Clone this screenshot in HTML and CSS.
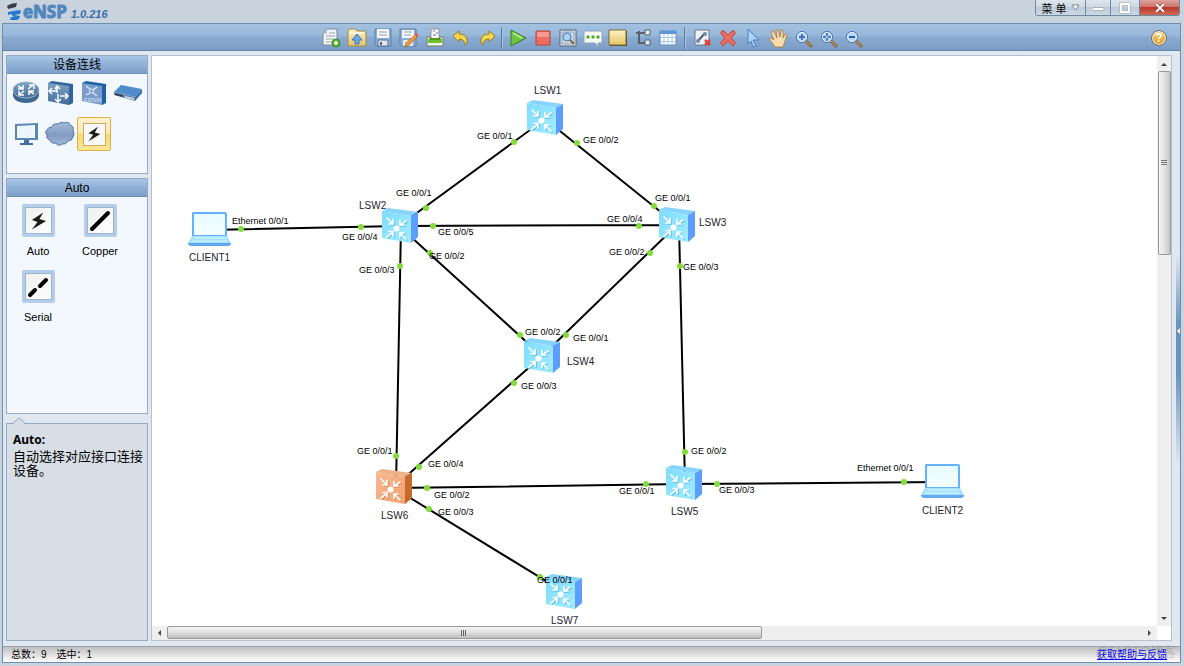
FILE: index.html
```html
<!DOCTYPE html>
<html lang="zh-CN">
<head>
<meta charset="utf-8">
<title>eNSP</title>
<link rel="stylesheet" href="styles.css">
</head>
<body>
<svg class="defs" aria-hidden="true">
  <defs>
    <linearGradient id="blueFace" x1="0" y1="0" x2="1" y2="1"><stop offset="0" stop-color="#7fdcfb"/><stop offset="1" stop-color="#a3ecff"/></linearGradient>
    <linearGradient id="orangeFace" x1="0" y1="0" x2="1" y2="1"><stop offset="0" stop-color="#f6b891"/><stop offset="1" stop-color="#f5a273"/></linearGradient>
    <linearGradient id="steel" x1="0" y1="0" x2="0" y2="1"><stop offset="0" stop-color="#7fa3c6"/><stop offset="1" stop-color="#426b96"/></linearGradient>
    <linearGradient id="cloudFill" x1="0" y1="0" x2="0" y2="1"><stop offset="0" stop-color="#a8bddb"/><stop offset=".55" stop-color="#8299c2"/><stop offset="1" stop-color="#a4b9d8"/></linearGradient>
    <linearGradient id="gold" x1="0" y1="0" x2="0" y2="1"><stop offset="0" stop-color="#fff3c4"/><stop offset="1" stop-color="#e3c566"/></linearGradient>
    <linearGradient id="screen" x1="0" y1="0" x2="0" y2="1"><stop offset="0" stop-color="#e8fbff"/><stop offset="1" stop-color="#f4ffff"/></linearGradient>
    <g id="arrows" fill="none" stroke-width="1.700" stroke-linecap="round">
      <path d="M5 10l6 6M11 11.500V16H7M24 13l-6 4M18 12.500V17h4M5 29l6-5M7 23.500h4V28M24 31l-6-6M22 25h-4v4"/>
    </g>
    <symbol id="switchBlue" viewBox="0 0 36 35">
      <path d="M0 3L6 0l30 4-7 4z" fill="#86d4ff"/>
      <path d="M29 8l7-4v25l-7 6z" fill="#5c9dff"/>
      <path d="M0 3l29 5v27L0 30z" fill="url(#blueFace)"/>
      <use href="#arrows" stroke="#5fc3ea" x="1" y="1"/>
      <use href="#arrows" stroke="#fff"/><circle cx="14.500" cy="20.500" r="3" fill="#fff"/>
    </symbol>
    <symbol id="switchOrange" viewBox="0 0 36 35">
      <path d="M0 3L6 0l30 4-7 4z" fill="#eeb287"/>
      <path d="M29 8l7-4v25l-7 6z" fill="#c46a2a"/>
      <path d="M0 3l29 5v27L0 30z" fill="url(#orangeFace)"/>
      <use href="#arrows" stroke="#de8a55" x="1" y="1"/>
      <use href="#arrows" stroke="#fff"/><circle cx="14.500" cy="20.500" r="3" fill="#fff"/>
    </symbol>
    <symbol id="laptop" viewBox="0 0 43 35">
      <path d="M5 1h32q2 0 2 2v22H4V3q0-2 1-2z" fill="#62b2ff"/>
      <path d="M6 3h31v21H6z" fill="url(#screen)"/>
      <path d="M4 25h35l4 7H0z" fill="#a5e2ff"/>
      <path d="M6 27h31M4 30h35" stroke="#d8f6ff" stroke-width="1"/>
      <path d="M0 32h43v1q-1 2-3 2H3q-2 0-3-2z" fill="#62a8ee"/>
    </symbol>
    <symbol id="bolt" viewBox="0 0 20 20">
      <path d="M15 1L3 9l6 2-6 8 15-9-7-2z" fill="#1b1d18"/>
    </symbol>
    <symbol id="glass" viewBox="0 0 20 20">
      <path d="M11 11l5 5" stroke="#8f6330" stroke-width="3" stroke-linecap="round"/>
      <path d="M11 11l5 5" stroke="#d8a560" stroke-width="1"/>
      <circle cx="7" cy="7" r="5.500" fill="#b5d5f5" stroke="#3f6fb0"/>
      <circle cx="7" cy="7" r="4.500" fill="none" stroke="#e8f3fd"/>
    </symbol>
  </defs>
</svg>

<div class="window">
  <header class="titlebar">
    <svg class="logo" width="15" height="17" viewBox="0 0 15 17" aria-hidden="true">
      <path d="M0 3q4-3 10-3l-1 4-8 2z" fill="#3b3f45"/>
      <path d="M3 6l8-1-1 2-6 1z" fill="#b4cbe4"/>
      <path d="M1 9l12-2 1 1-1 3-6 1 6 1-1 3q-4 2-9 1l1-3h3l-3-3-3 1z" fill="#2678cf"/>
    </svg>
    <h1 class="brand">eNSP</h1>
    <span class="version">1.0.216</span>
    <div class="window-controls">
      <button class="wc wc-menu" type="button">菜 单
        <svg width="9" height="7" viewBox="0 0 9 7" aria-hidden="true"><path d="M1 1h7L4.500 6z" fill="#fff" stroke="#7c8793"/></svg>
      </button>
      <button class="wc wc-min" type="button" aria-label="最小化"><svg width="12" height="10" viewBox="0 0 12 10"><path d="M1 6h10" stroke="#8a949e" stroke-width="3"/><path d="M1 6h10" stroke="#fff" stroke-width="2"/></svg></button>
      <button class="wc wc-max" type="button" aria-label="最大化"><svg width="12" height="12" viewBox="0 0 12 12"><path d="M2 2h8v8H2z" fill="none" stroke="#9aa4ae" stroke-width="3"/><path d="M2 2h8v8H2z" fill="none" stroke="#fff" stroke-width="2"/></svg></button>
      <button class="wc wc-close" type="button" aria-label="关闭"><svg width="12" height="10" viewBox="0 0 12 10"><path d="M2 1l8 8M10 1L2 9" stroke="#6d2b23" stroke-width="3"/><path d="M2 1l8 8M10 1L2 9" stroke="#fff" stroke-width="2"/></svg></button>
    </div>
  </header>

  <div class="client">
    <nav class="toolbar" aria-label="工具栏">
      <span></span>
      <div class="tools">
        <div class="tool-group wide">
          <button type="button" aria-label="新建"><svg viewBox="0 0 20 20"><path d="M6 1h10v16H2V6z" fill="#f2f4f7" stroke="#7a8897"/><path d="M6 1v5H2z" fill="#b9c3ce"/><path d="M8 5h6M5 8h9M5 11h8M5 14h6" stroke="#98a4b1"/><circle cx="15" cy="15" r="4" fill="#5cb531" stroke="#3b8a1b"/><path d="M13 15h4M15 13v4" stroke="#fff" stroke-width="1.500"/></svg></button>
          <button type="button" aria-label="打开"><svg viewBox="0 0 20 20"><path d="M1 3l1-2h6l2 2h8l1 2v13H1z" fill="url(#gold)" stroke="#a58b47"/><path d="M3 5h14" stroke="#fffbe3" stroke-width="2"/><path d="M10 6l5 6h-3v4H8v-4H5z" fill="#6fa8ea" stroke="#3e74ba"/></svg></button>
          <button type="button" aria-label="保存"><svg viewBox="0 0 20 20"><path d="M2 1h16v17H3l-1-1z" fill="#8daed9" stroke="#5f7ea5"/><path d="M4 1h12v9H4z" fill="#f6f8fb"/><path d="M6 4h8M6 7h8" stroke="#8fa0b3"/><path d="M5 12h10v6H5z" fill="#dfe6ee" stroke="#56708f"/><path d="M7 14h2v3H7z" fill="#466185"/></svg></button>
          <button type="button" aria-label="另存为"><svg viewBox="0 0 20 20"><path d="M1 1h16v17H3l-2-2z" fill="#8daed9" stroke="#5f7ea5"/><path d="M3 2h12v8H3z" fill="#f6f8fb"/><path d="M5 4h8M5 7h7" stroke="#8fa0b3"/><path d="M4 12h10v6H4z" fill="#dfe6ee"/><path d="M17 6l2 2-9 9-4 2 1-4z" fill="#f29a3a" stroke="#a65d1d" stroke-width=".7"/><path d="M16 6l2-1 1 2-1 2z" fill="#d9534f"/></svg></button>
          <button type="button" aria-label="打印"><svg viewBox="0 0 20 20"><path d="M6 1h8v10H6z" fill="#fafafa" stroke="#8b959f"/><path d="M8 3h2M11 5h2M8 7h3" stroke="#6d7780"/><path d="M2 9h3v4h10V9h3v9H2z" fill="#f1f3ee" stroke="#6d7c65"/><path d="M3 11h14v4H3z" fill="#6fc02d"/><path d="M5 10h10v2H5z" fill="#4e9a17"/></svg></button>
          <button type="button" aria-label="撤销"><svg viewBox="0 0 20 20"><path d="M2 8l6-5v3q9 0 8 9l-2 2q0-6-6-6v3z" fill="#f4d84f" stroke="#9c7d16"/></svg></button>
          <button type="button" aria-label="重做"><svg viewBox="0 0 20 20"><path d="M18 8l-6-5v3q-9 0-8 9l2 2q0-6 6-6v3z" fill="#f4d84f" stroke="#9c7d16"/></svg></button>
        </div>
        <span class="sep"></span>
        <div class="tool-group">
          <button type="button" aria-label="开启设备"><svg viewBox="0 0 20 20"><path d="M3 2l15 8-15 8z" fill="#6cc43f" stroke="#33801a"/><path d="M5 5l9 5" stroke="#b9eb9c" stroke-width="2"/></svg></button>
          <button type="button" aria-label="停止设备"><svg viewBox="0 0 20 20"><path d="M3 3h14v14H3z" fill="#ef6a61" stroke="#b5473f"/><path d="M4 4h12v5H4z" fill="#f79a92"/></svg></button>
          <button type="button" aria-label="数据抓包"><svg viewBox="0 0 20 20"><path d="M2 2h16v16H2z" fill="#e9eef4" stroke="#4f6177"/><path d="M4 4h12v12H4z" fill="#c9d9ea" stroke="#8c9db0"/><circle cx="9" cy="9" r="4" fill="#a6d1f8" stroke="#4d7db5"/><path d="M12 12l4 4" stroke="#8f6330" stroke-width="2"/></svg></button>
          <button type="button" aria-label="显示接口"><svg viewBox="0 0 20 20"><path d="M1 3h18v12h-4v4l-3-4H1z" fill="#f5faf5" stroke="#8ba3b8"/><circle cx="5" cy="9" r="1.700" fill="#5ca52d"/><circle cx="10" cy="9" r="1.700" fill="#5ca52d"/><circle cx="15" cy="9" r="1.700" fill="#5ca52d"/></svg></button>
          <button type="button" aria-label="调色板"><svg viewBox="0 0 20 20"><path d="M2 3h17v15H2z" fill="#54482b"/><path d="M1 2h17v15H1z" fill="url(#gold)" stroke="#7b6a37"/></svg></button>
          <button type="button" aria-label="拓扑树"><svg viewBox="0 0 20 20"><path d="M3 5h3M6 3v12h6M6 5h6" fill="none" stroke="#59626c" stroke-width="2"/><path d="M12 2h5v5h-5zM12 12h5v5h-5z" fill="#e7edf4" stroke="#59626c"/></svg></button>
          <button type="button" aria-label="网格"><svg viewBox="0 0 20 20"><path d="M2 3h16v14H2z" fill="#fff" stroke="#5b8bc0"/><path d="M2 3h16v3H2z" fill="#5f97d6"/><path d="M2 9.500h16M2 13.500h16M6 6v11M10 6v11M14 6v11" stroke="#a9c9ea"/></svg></button>
        </div>
        <span class="sep sep-wide"></span>
        <div class="tool-group">
          <button type="button" aria-label="删除连线"><svg viewBox="0 0 20 20"><path d="M2 2h14v15H2z" fill="#eef1f5" stroke="#66788c"/><path d="M5 13l7-8" stroke="#44607e" stroke-width="2"/><circle cx="5" cy="13" r="2" fill="#6d8cb0"/><circle cx="12" cy="6" r="2" fill="#6d8cb0"/><path d="M12 12l5 5M17 12l-5 5" stroke="#e04236" stroke-width="2.500"/></svg></button>
          <button type="button" aria-label="删除"><svg viewBox="0 0 20 20"><path d="M5 5l10 10M15 5L5 15" stroke="#b1453f" stroke-width="5" stroke-linecap="round"/><path d="M5 5l10 10M15 5L5 15" stroke="#ee6a61" stroke-width="3.500" stroke-linecap="round"/></svg></button>
          <button type="button" aria-label="选择"><svg viewBox="0 0 20 20"><path d="M5 1l11 11h-6l3 6-3 1-2-6-3 3z" fill="#a9d2fa" stroke="#4b80bd"/></svg></button>
          <button type="button" aria-label="拖动"><svg viewBox="0 0 20 20"><path d="M7 19q-2-4-6-8 1-2 5 1L3 4q2-2 3 0l3 6-1-8q1-1 2 0l2 7 1-7q2-1 2 1v7l2-4q2-1 2 1l-3 9-1 3z" fill="#f9dcae" stroke="#a8793f" stroke-width=".8"/></svg></button>
          <button type="button" aria-label="放大"><svg viewBox="0 0 20 20"><g transform="translate(2 2)"><use href="#glass" width="20" height="20"/><path d="M4 7h6M7 4v6" stroke="#2d5fa8" stroke-width="1.500"/></g></svg></button>
          <button type="button" aria-label="重置"><svg viewBox="0 0 20 20"><g transform="translate(2 2)"><use href="#glass" width="20" height="20"/><path d="M3 7h3M8 7h3M7 3v3M7 8v3" stroke="#2d5fa8" stroke-width="1.500"/></g></svg></button>
          <button type="button" aria-label="缩小"><svg viewBox="0 0 20 20"><g transform="translate(2 2)"><use href="#glass" width="20" height="20"/><path d="M4 7h6" stroke="#2d5fa8" stroke-width="2"/></g></svg></button>
        </div>
      </div>
      <button class="help" type="button" aria-label="帮助">?</button>
    </nav>

    <div class="body">
      <aside class="sidebar">
        <section class="panel">
          <h2 class="panel-head">设备连线</h2>
          <div class="kinds">
            <button type="button" aria-label="路由器"><svg width="28" height="24" viewBox="0 0 28 24"><path d="M1 9v6q2 7 13 7t13-7V9z" fill="#3f678f"/><ellipse cx="14" cy="9" rx="13" ry="8" fill="url(#steel)" stroke="#9db6cf"/><path d="M6 5l5 3M11 4v4H6M22 13l-5-3M17 14v-4h5M16 8l5-4M17 4h5v4M12 10l-5 4M7 10v4h5" fill="none" stroke="#fff" stroke-width="1.500"/></svg></button>
            <button type="button" aria-label="交换机"><svg width="27" height="26" viewBox="0 0 27 26"><path d="M1 3l4-2 21 3v19l-4 2z" fill="#2f669e"/><path d="M1 3l21 3v19L1 21z" fill="url(#steel)"/><path d="M3 11h7M5 8l-3 3 3 3M10 13V7M8 9l2-3 3 3M20 16h-7M18 13l3 3-3 3M11 14v7M8 19l3 3 3-3" fill="none" stroke="#fff" stroke-width="1.500"/></svg></button>
            <button type="button" aria-label="帧中继"><svg width="26" height="26" viewBox="0 0 26 26"><path d="M1 3l4-2 20 3v19l-4 2z" fill="#1d63a8"/><path d="M1 3l20 3v19L1 21z" fill="#7b9ccb"/><path d="M5 6l4 3M16 7l-4 3M5 15l4-2M16 16l-4-3" stroke="#e3ecf7" stroke-width="1.200"/><circle cx="10.500" cy="11" r="2" fill="none" stroke="#e3ecf7"/><text x="3" y="22" class="frsw">FRSW</text></svg></button>
            <button type="button" aria-label="设备"><svg width="30" height="18" viewBox="0 0 30 18"><path d="M1 8l7-7 21 4-7 8z" fill="#4f8ccc"/><path d="M1 8l21 5v4L1 11z" fill="#6a86a6"/><path d="M22 13l7-8v4l-7 8z" fill="#3f6ea4"/><path d="M2 9l8 2v2l-8-2z" fill="#2f4258"/><path d="M12 12l9 2v2l-9-2z" fill="#c7d5e4"/></svg></button>
            <button type="button" aria-label="终端"><svg width="25" height="24" viewBox="0 0 25 24"><path d="M1 2l23-1v17H1z" fill="#5c87b5"/><path d="M3 4l18-1v13H3z" fill="#eff5fc"/><path d="M10 18h5v3h4v2H6v-2h4z" fill="#426f9f"/></svg></button>
            <button type="button" aria-label="其它设备"><svg width="30" height="26" viewBox="0 0 30 26"><path d="M7 6q1-4 6-3 3-3 6-1 5-2 6 2 4 1 3 5 2 4 0 7-1 4-5 4-2 4-6 3-4 3-6-1-5 1-6-3-4-1-3-5-3-3 0-5 1-3 5-3z" fill="url(#cloudFill)" stroke="#4d7aa8"/></svg></button>
            <button type="button" class="selected" aria-label="设备连线" aria-pressed="true"><span class="bolt-tile"><svg width="16" height="16"><use href="#bolt"/></svg></span></button>
          </div>
        </section>

        <section class="panel panel-models">
          <h2 class="panel-head">Auto</h2>
          <div class="models">
            <button type="button" class="model"><span class="tile"><svg width="19" height="20"><use href="#bolt"/></svg></span>Auto</button>
            <button type="button" class="model"><span class="tile"><svg width="22" height="22" viewBox="0 0 22 22"><path d="M3 19L19 3" stroke="#000" stroke-width="4" stroke-linecap="round"/></svg></span>Copper</button>
            <button type="button" class="model"><span class="tile"><svg width="22" height="22" viewBox="0 0 22 22"><path d="M3 19l5-5M13 10l6-6" stroke="#000" stroke-width="4" stroke-linecap="round"/></svg></span>Serial</button>
          </div>
        </section>

        <section class="info">
          <svg class="info-tip" width="14" height="8" viewBox="0 0 14 8" aria-hidden="true"><path d="M0 8l7-7 7 7z" fill="#d8dee6"/><path d="M0 7l7-6 7 6" fill="none" stroke="#8ea5bc"/></svg>
          <h3>Auto:</h3>
          <p>自动选择对应接口连接设备。</p>
        </section>
      </aside>

      <main class="workspace">
        <svg class="topology" role="img" aria-label="网络拓扑">
          <g transform="translate(-152 -56)">
            <g class="links">
              <path d="M545 119L399 226M545 119L677 225M399 226L677 225M399 226L542 356M677 225L542 356M209 230L399 226M401 226L396 487M679 225L685 484M542 356L394 487M394 488L684 484M684 484L942 482M394 488L564 592"/>
            </g>
            <g class="ports">
              <circle cx="514" cy="142" r="3"/><circle cx="577" cy="143" r="3"/><circle cx="426" cy="208" r="3"/><circle cx="654" cy="206" r="3"/>
              <circle cx="361" cy="227" r="3"/><circle cx="433" cy="226" r="3"/><circle cx="639" cy="226" r="3"/><circle cx="241" cy="229" r="3"/>
              <circle cx="430" cy="253" r="3"/><circle cx="650" cy="253" r="3"/><circle cx="400" cy="266" r="3"/><circle cx="680" cy="266" r="3"/>
              <circle cx="520" cy="335" r="3"/><circle cx="566" cy="335" r="3"/><circle cx="514" cy="383" r="3"/><circle cx="396" cy="456" r="3"/>
              <circle cx="419" cy="467" r="3"/><circle cx="427" cy="488" r="3"/><circle cx="429" cy="509" r="3"/><circle cx="646" cy="484" r="3"/>
              <circle cx="685" cy="452" r="3"/><circle cx="717" cy="484" r="3"/><circle cx="904" cy="482" r="3"/><circle cx="540" cy="577" r="3"/>
            </g>
            <use href="#switchBlue" x="527" y="100" width="36" height="35"/>
            <use href="#switchBlue" x="382" y="208" width="36" height="35"/>
            <use href="#switchBlue" x="659" y="207" width="36" height="35"/>
            <use href="#switchBlue" x="524" y="338" width="36" height="35"/>
            <use href="#switchBlue" x="666" y="465" width="36" height="35"/>
            <use href="#switchOrange" x="376" y="469" width="36" height="35"/>
            <use href="#switchBlue" x="546" y="574" width="36" height="35"/>
            <use href="#laptop" x="188" y="211" width="43" height="35"/>
            <use href="#laptop" x="921" y="463" width="43" height="35"/>
            <g class="port-names">
              <text x="477" y="139">GE 0/0/1</text><text x="583" y="143">GE 0/0/2</text>
              <text x="396" y="196">GE 0/0/1</text><text x="655" y="201">GE 0/0/1</text>
              <text x="232" y="224">Ethernet 0/0/1</text><text x="342" y="240">GE 0/0/4</text>
              <text x="438" y="235">GE 0/0/5</text><text x="607" y="222">GE 0/0/4</text>
              <text x="429" y="259">GE 0/0/2</text><text x="609" y="255">GE 0/0/2</text>
              <text x="359" y="273">GE 0/0/3</text><text x="683" y="270">GE 0/0/3</text>
              <text x="525" y="335">GE 0/0/2</text><text x="573" y="341">GE 0/0/1</text>
              <text x="521" y="389">GE 0/0/3</text><text x="357" y="454">GE 0/0/1</text>
              <text x="428" y="467">GE 0/0/4</text><text x="434" y="498">GE 0/0/2</text>
              <text x="438" y="515">GE 0/0/3</text><text x="619" y="494">GE 0/0/1</text>
              <text x="691" y="454">GE 0/0/2</text><text x="719" y="493">GE 0/0/3</text>
              <text x="857" y="471">Ethernet 0/0/1</text><text x="537" y="583">GE 0/0/1</text>
            </g>
            <g class="node-names">
              <text x="534" y="94">LSW1</text><text x="359" y="209">LSW2</text><text x="699" y="226">LSW3</text>
              <text x="567" y="365">LSW4</text><text x="671" y="515">LSW5</text><text x="381" y="519">LSW6</text>
              <text x="551" y="624">LSW7</text><text x="189" y="261">CLIENT1</text><text x="922" y="514">CLIENT2</text>
            </g>
          </g>
        </svg>
        <div class="vscroll" aria-hidden="true"><i class="arrow up"></i><div class="vtrack"><div class="thumb"><i class="grip"></i></div></div><i class="arrow down"></i></div>
        <div class="hscroll" aria-hidden="true"><i class="arrow left"></i><div class="htrack"><div class="thumb"><i class="grip"></i></div></div><i class="arrow right"></i></div>
      </main>
      <div class="rail"><i class="arrow left"></i></div>
    </div>

    <footer class="status">
      <span>总数：9</span><span>选中：1</span>
      <a class="feedback" href="#">获取帮助与反馈</a>
      <span class="watermark">@51CTO博客</span>
    </footer>
  </div>
</div>
</body>
</html>
```

FILE: styles.css
```css
* { box-sizing: border-box; }

body {
  margin: 0;
  font-family: "Liberation Sans", "Noto Sans CJK SC", sans-serif;
  font-size: 11px;
  color: #000;
}

button {
  padding: 0;
  border: 0;
  background: none;
  font: inherit;
  color: inherit;
}

h1, h2, h3, p { margin: 0; }

.defs { position: absolute; width: 0; height: 0; }

.window {
  display: flex;
  flex-direction: column;
  height: 100vh;
  padding: 0 3px 3px 2px;
  background: #c9d3dd;
}

/* Title bar */
.titlebar {
  display: flex;
  align-items: center;
  height: 23px;
  padding-left: 5px;
}

.brand {
  margin-left: 1px;
  font: bold 17px/23px "Open Sans", sans-serif;
  color: #5087bd;
  -webkit-text-stroke: 1px #5087bd;
}

.version {
  margin: 4px 0 0 4px;
  font-size: 11px;
  font-weight: bold;
  font-style: italic;
  color: #3a6ea8;
}

.window-controls {
  display: flex;
  align-self: flex-start;
  height: 16px;
  margin-left: auto;
  margin-right: 1px;
  border: 1px solid #7089a3;
  border-top: 0;
  border-radius: 0 0 3px 3px;
  overflow: hidden;
}

.wc {
  display: flex;
  align-items: center;
  justify-content: center;
  gap: 4px;
  background: linear-gradient(#dfe6ed, #cdd7e1 50%, #bccad7 50%, #cdd8e2);
}

.wc + .wc { border-left: 1px solid #7089a3; }
.wc-menu { width: 49px; font-size: 11px; white-space: nowrap; }
.wc-min { width: 25px; }
.wc-max { width: 29px; }
.wc-close { width: 40px; background: linear-gradient(#dba59e, #cf7468 45%, #b93a2b 50%, #cf6a58); }

/* Client frame */
.client {
  display: flex;
  flex: 1;
  flex-direction: column;
  min-height: 0;
  border: 1px solid #6d8fb3;
  background: #e1e7ee;
}

.toolbar {
  display: grid;
  grid-template-columns: 1fr auto 1fr;
  align-items: center;
  height: 27px;
  padding-top: 1px;
  border-bottom: 1px solid #5f84ab;
  background: linear-gradient(#a3c1e0, #98b8da 45%, #8bacd2 50%, #7b9cc4);
}

.tools, .tool-group { display: flex; align-items: center; }

.tool-group button {
  display: flex;
  justify-content: center;
  width: 25px;
}

.tool-group.wide button { width: 26px; }
.tool-group svg { width: 20px; height: 20px; }

.sep {
  width: 2px;
  height: 22px;
  margin: 0 2px 0 1px;
  border-left: 1px solid #567aa3;
  border-right: 1px solid #a9c4e1;
}

.sep-wide { margin: 0 4px; }

.help {
  justify-self: end;
  width: 16px;
  height: 16px;
  margin-right: 13px;
  border: 1px solid #6c6f75;
  border-radius: 50%;
  background: linear-gradient(#f6cf7a, #e09a20);
  box-shadow: inset 0 0 0 1px #f7efe0;
  color: #fff;
  font-size: 12px;
  font-weight: bold;
  line-height: 14px;
}

.body {
  display: flex;
  flex: 1;
  min-height: 0;
  padding: 4px 0 5px 3px;
}

/* Sidebar */
.sidebar {
  display: flex;
  flex-direction: column;
  flex: none;
  width: 142px;
  margin-right: 3px;
}

.panel {
  height: 119px;
  margin-bottom: 4px;
  border: 1px solid #94abc3;
  background: #f2f8fd;
}

.panel-models { height: 236px; margin-bottom: 9px; }

.panel-head {
  height: 18px;
  border-bottom: 1px solid #6d8fb3;
  background: linear-gradient(#a9c6e5, #8fb0d6 50%, #7f9fc8);
  font-size: 12px;
  font-weight: normal;
  line-height: 18px;
  text-align: center;
}

.kinds {
  display: grid;
  grid-template-columns: repeat(4, 34px);
  grid-auto-rows: 34px;
  row-gap: 7px;
  padding: 2px 0 0 2px;
}

.kinds button {
  display: flex;
  align-items: center;
  justify-content: center;
}

.kinds .selected {
  border: 1px solid #e0b040;
  border-radius: 2px;
  background: linear-gradient(#fff1cf, #fde8ae 50%, #fbd76a 50%, #fde795);
}

.frsw { font-size: 6px; fill: #d3e0f1; }

.bolt-tile {
  display: flex;
  align-items: center;
  justify-content: center;
  width: 23px;
  height: 23px;
  border: 1px solid #cbab62;
  background: #f8f8f8;
}

.models {
  display: grid;
  grid-template-columns: repeat(2, 62px);
  grid-auto-rows: 66px;
  padding-top: 7px;
}

.model {
  display: flex;
  flex-direction: column;
  align-items: center;
  gap: 8px;
}

.tile {
  display: flex;
  align-items: center;
  justify-content: center;
  width: 33px;
  height: 33px;
  border: 3px solid #b4cdea;
  border-radius: 2px;
  background: linear-gradient(135deg, #efefef, #fff);
  box-shadow: inset 0 0 0 1px #9db4cf;
}

.info {
  position: relative;
  flex: 1;
  padding: 9px 4px 0 6px;
  border: 1px solid #94abc3;
  background: #d8dee6;
}

.info-tip { position: absolute; left: 5px; top: -7px; }
.info h3 { font: bold 12px/14px "Noto Sans", "Open Sans", sans-serif; }
.info p { margin-top: 3px; font-size: 13px; line-height: 14px; }

/* Workspace */
.workspace {
  display: grid;
  grid-template: minmax(0, 1fr) 14px / minmax(0, 1fr) 14px;
  flex: 1;
  min-width: 0;
  border: 1px solid #b3c1d0;
  background: #fff;
}

.topology { width: 100%; height: 100%; }
.links { fill: none; stroke: #000; stroke-width: 2; }
.ports { fill: #84dc3c; }
.port-names { font-size: 9px; }
.node-names { font-size: 10px; fill: #1c1c2c; }

.vscroll, .hscroll { display: flex; align-items: center; background: #efefef; }
.vscroll { flex-direction: column; width: 14px; }
.hscroll { height: 14px; }
.vtrack { flex: 1; width: 13px; }
.htrack { flex: 1; height: 14px; }

.thumb {
  display: flex;
  align-items: center;
  justify-content: center;
  border: 1px solid #9a9a9a;
  border-radius: 2px;
}

.vtrack .thumb { height: 34%; background: linear-gradient(90deg, #f4f4f4, #e2e2e2 50%, #c4c4c8); }
.htrack .thumb { width: 61%; height: 13px; background: linear-gradient(#f4f4f4, #e0e0e0 50%, #bdbdbd); }

.vtrack .grip { width: 6px; height: 6px; background: repeating-linear-gradient(#777 0 1px, transparent 1px 2px); }
.htrack .grip { width: 6px; height: 6px; background: repeating-linear-gradient(90deg, #666 0 1px, transparent 1px 2px); }

.arrow { width: 0; height: 0; border: 3px solid transparent; }
.arrow.up { margin: 4px 0 5px; border-bottom-color: #444; }
.arrow.down { margin: 5px 0 3px; border-top-color: #444; }
.arrow.left { margin: 0 6px 0 3px; border-right-color: #444; }
.arrow.right { margin: 0 3px 0 6px; border-left-color: #444; }

.rail {
  display: flex;
  align-items: center;
  justify-content: flex-end;
  width: 8px;
  padding-bottom: 34px;
  background: linear-gradient(transparent 34%, rgba(92, 137, 184, 0.9) 46%, rgba(92, 137, 184, 0.9) 54%, transparent 70%) right / 4px 100% no-repeat;
}

.rail .arrow.left { margin: 0; border-right-color: #fff; }

/* Status bar */
.status {
  display: flex;
  align-items: center;
  gap: 10px;
  height: 16px;
  padding: 0 13px 0 8px;
  position: relative;
  border-top: 1px solid #98a2ad;
  background: linear-gradient(#bfbfbf, #fff);
  font-size: 10px;
  line-height: 15px;
}

.feedback { margin-left: auto; color: #0000f0; }

.watermark {
  position: absolute;
  right: 4px;
  top: -3px;
  color: rgba(110, 110, 110, 0.3);
  font-size: 13px;
  pointer-events: none;
}
```
